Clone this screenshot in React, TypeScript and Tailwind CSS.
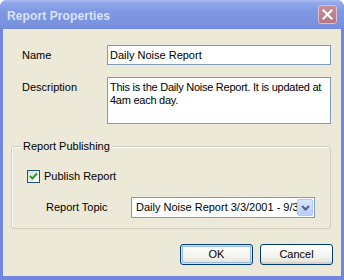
import React from "react";

const font = { fontFamily: '"Liberation Sans", Arial, sans-serif' };

function XpButton({ label, isDefault }: { label: string; isDefault?: boolean }) {
  return (
    <div
      className={
        "w-[73px] h-[21px] rounded-[3px] border border-[#003c74] flex items-center justify-center text-[11px] text-black bg-[linear-gradient(to_bottom,#ffffff_0%,#f4f3ee_60%,#e3e0d4_100%)] " +
        (isDefault
          ? "shadow-[inset_0_0_0_1px_#cee7ff,inset_0_0_0_2px_#98b8ea]"
          : "shadow-[inset_0_-2px_0_0_#d6d0c5]")
      }
    >
      {label}
    </div>
  );
}

export default function App() {
  return (
    <div className="w-[344px] h-[280px] bg-white" style={font}>
      <div className="w-[344px] h-[280px] rounded-t-[7px] bg-[#7386dd] flex flex-col overflow-hidden">
        {/* Title bar */}
        <div className="h-[29px] flex items-center pl-[7px] pr-[7px] bg-[linear-gradient(to_bottom,#a9bcf0_0px,#8fa7ea_3px,#7f97e2_12px,#7b92df_24px,#7489dc_29px)]">
          <span className="pt-[3px] text-[12px] font-bold text-[#d8e4f8] leading-none tracking-[0.1px]">
            Report Properties
          </span>
          <div className="ml-auto w-[19px] h-[19px] rounded-[3px] border border-[#dcc0ca] bg-[linear-gradient(to_bottom,#c98d9b,#b77582)] flex items-center justify-center">
            <svg width="11" height="11" viewBox="0 0 11 11">
              <path d="M1.5 1.5 L9.5 9.5 M9.5 1.5 L1.5 9.5" stroke="#ffffff" strokeWidth="2" strokeLinecap="square" />
            </svg>
          </div>
        </div>

        {/* Body */}
        <div className="flex-1 mx-[3px] mb-[4px] bg-[#ece9d8] pl-[8px] pr-[8px] pt-[16px] flex flex-col text-[11px] text-black">
          {/* Name */}
          <div className="flex items-center pl-[11px]">
            <div className="w-[85px] leading-[13px]">Name</div>
            <div className="w-[224px] h-[20px] bg-white border border-[#7f9db9] flex items-center pl-[2px] leading-[13px]">
              Daily Noise Report
            </div>
          </div>

          {/* Description */}
          <div className="flex items-start pl-[11px] mt-[12px]">
            <div className="w-[85px] pt-[4px] leading-[13px]">Description</div>
            <div className="w-[224px] h-[47px] bg-white border border-[#7f9db9] pl-[2px] pt-[3px] leading-[13px] whitespace-nowrap overflow-hidden tracking-[-0.25px]">
              This is the Daily Noise Report. It is updated at
              <br />
              4am each day.
            </div>
          </div>

          {/* Group box */}
          <div className="relative mt-[22px] w-[320px] h-[83px] border border-[#d0d0bf] rounded-[3px] pt-[23px] pl-[15px] shadow-[inset_1px_1px_0_0_#ffffff]">
            <span className="absolute left-[9px] top-[-7px] px-[2px] bg-[#ece9d8] leading-[13px]">
              Report Publishing
            </span>
            <div className="flex items-center">
              <div className="w-[13px] h-[13px] border border-[#1c5180] bg-[linear-gradient(to_bottom_right,#dcdcd7,#ffffff)] flex items-center justify-center">
                <svg width="11" height="11" viewBox="0 0 11 11">
                  <path d="M2 5 L4.3 7.5 L9 2.5" stroke="#21a121" strokeWidth="2" fill="none" />
                </svg>
              </div>
              <span className="ml-[4px] leading-[13px]">Publish Report</span>
            </div>
            <div className="flex items-center mt-[14px] pl-[19px]">
              <div className="w-[85px] leading-[13px]">Report Topic</div>
              <div className="w-[184px] h-[21px] bg-white border border-[#7f9db9] flex items-center overflow-hidden">
                <div className="flex-1 min-w-0 pl-[4px] whitespace-nowrap overflow-hidden leading-[13px]">
                  Daily Noise Report 3/3/2001 - 9/3
                </div>
                <div className="w-[16px] h-[17px] mr-[1px] rounded-[2px] border border-[#b1c7f5] bg-[linear-gradient(to_bottom,#d8e4fd,#b9cdfa)] flex items-center justify-center shrink-0">
                  <svg width="9" height="6" viewBox="0 0 9 6">
                    <path d="M1 1 L4.5 4.5 L8 1" stroke="#4d6185" strokeWidth="2" fill="none" />
                  </svg>
                </div>
              </div>
            </div>
          </div>

          {/* Buttons */}
          <div className="flex justify-end gap-[7px] mt-[15px]">
            <XpButton label="OK" isDefault />
            <XpButton label="Cancel" />
          </div>
        </div>
      </div>
    </div>
  );
}
